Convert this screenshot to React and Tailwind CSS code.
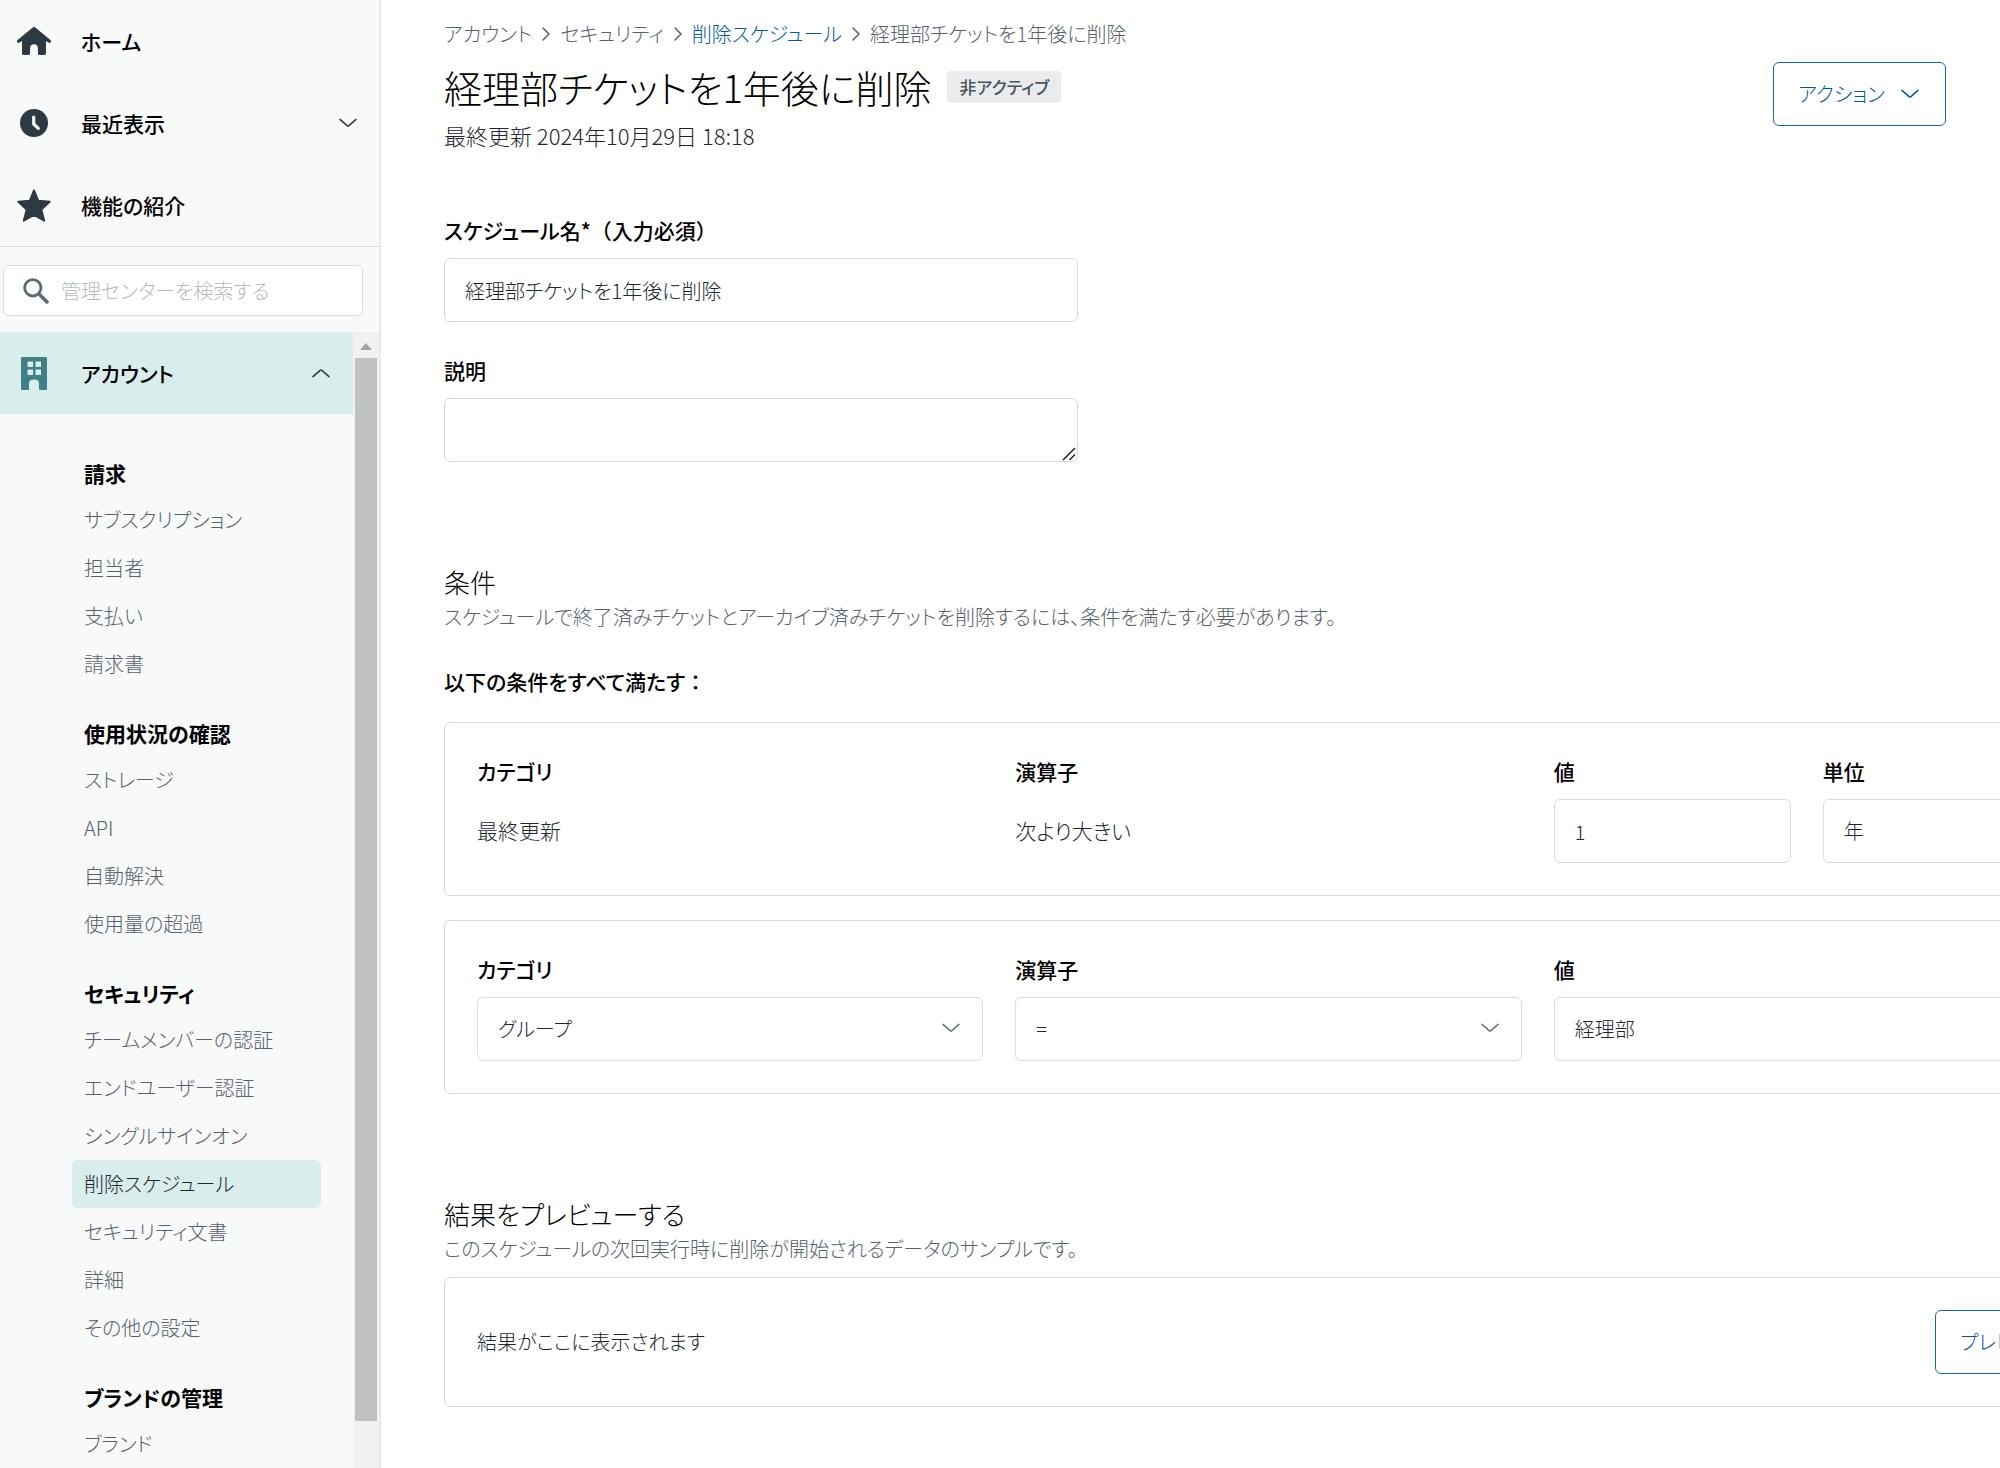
import React from "react";

const BODY = "text-[20px] leading-8";
const LABEL = "text-[21px] leading-8 font-medium text-black";

const groups = [
  { title: "請求", items: ["サブスクリプション", "担当者", "支払い", "請求書"] },
  { title: "使用状況の確認", items: ["ストレージ", "API", "自動解決", "使用量の超過"] },
  {
    title: "セキュリティ",
    items: [
      "チームメンバーの認証",
      "エンドユーザー認証",
      "シングルサインオン",
      "削除スケジュール",
      "セキュリティ文書",
      "詳細",
      "その他の設定",
    ],
  },
  { title: "ブランドの管理", items: ["ブランド"] },
];

function Chevron({ className = "", up = false }) {
  return (
    <svg viewBox="0 0 18 10" className={`h-[10px] w-[18px] shrink-0 ${className}`} fill="none" stroke="currentColor" strokeWidth="1.5" strokeLinecap="round" strokeLinejoin="round" aria-hidden="true">
      <path d={up ? "M1 8.6 8.1 2.4a1.3 1.3 0 0 1 1.8 0L17 8.6" : "M1 1.4 8.1 7.6a1.3 1.3 0 0 0 1.8 0L17 1.4"} />
    </svg>
  );
}

function HomeIcon() {
  return (
    <svg viewBox="0 0 34 28" className="h-7 w-[34px]" fill="currentColor" aria-hidden="true">
      <path d="M15.7.5a2 2 0 0 1 2.6 0L33.4 13a1.6 1.6 0 0 1-2 2.6L29 14v12.3c0 1-.6 1.7-1.6 1.7h-4.8c-1 0-1.7-.7-1.7-1.7V21c0-2.200-1.500-3.800-3.900-3.800S13.100 18.800 13.100 21v5.300c0 1-.7 1.700-1.700 1.700H6.600C5.600 28 5 27.300 5 26.300V14l-2.400 1.600a1.600 1.600 0 0 1-2-2.600z" />
    </svg>
  );
}

function ClockIcon() {
  return (
    <svg viewBox="0 0 28 28" className="size-7" aria-hidden="true">
      <circle cx="14" cy="14" r="14" fill="currentColor" />
      <path d="M13.700 8v7l4.600 4.300" fill="none" stroke="#f8f9f9" strokeWidth="3.200" strokeLinecap="round" strokeLinejoin="round" />
    </svg>
  );
}

function StarIcon() {
  return (
    <svg viewBox="0 0 34 33" className="h-[33px] w-[34px]" fill="currentColor" stroke="currentColor" strokeWidth="2" strokeLinejoin="round" aria-hidden="true">
      <path d="m17 1.500 4.300 10.300 11.400 1-8.400 7.600 2.900 11.300L17 25.800 6.800 31.700l2.900-11.300-8.400-7.600 11.400-1z" />
    </svg>
  );
}

function SearchIcon() {
  return (
    <svg viewBox="0 0 26 26" className="size-[26px] shrink-0 text-[#5c6970]" fill="none" stroke="currentColor" strokeWidth="2.800" aria-hidden="true">
      <circle cx="9.800" cy="9.800" r="8.200" />
      <path d="m16 16 9 9" strokeWidth="3.400" />
    </svg>
  );
}

function BuildingIcon() {
  return (
    <svg viewBox="0 0 26 33" className="h-[33px] w-[26px]" fill="#408084" aria-hidden="true">
      <path fillRule="evenodd" d="M1.500 0h23C25.500 0 26 .6 26 1.500v30c0 .9-.5 1.500-1.500 1.500h-5c-1 0-1.500-.6-1.500-1.500V26c0-2.400-2-3.500-5-3.500S8 23.600 8 26v5.500C8 32.400 7.500 33 6.500 33h-5C.5 33 0 32.400 0 31.500v-30C0 .6.5 0 1.500 0zM6.500 4.500v5.500h5.500V4.500zm8 0v5.500H20V4.500zm-8 8V18h5.500v-5.500zm8 0V18H20v-5.500z" />
    </svg>
  );
}

function Separator() {
  return (
    <svg viewBox="0 0 8 14" className="h-[14px] w-2 shrink-0" fill="none" stroke="currentColor" strokeWidth="1.500" strokeLinecap="round" strokeLinejoin="round" aria-hidden="true">
      <path d="m1 1 6 6-6 6" />
    </svg>
  );
}

function NavRow({ icon, label, chevron }) {
  return (
    <button type="button" className="flex h-[82px] w-full items-center pr-[22px] text-left">
      <span className="ml-4 flex w-9 justify-center text-[#2f3941]">{icon}</span>
      <span className={`ml-[29px] flex-1 ${LABEL}`}>{label}</span>
      {chevron && <Chevron className="text-[#2f3941]" />}
    </button>
  );
}

function Sidebar() {
  return (
    <nav className="flex w-[381px] shrink-0 flex-col border-r-2 border-[#e6e8e9] bg-[#f8f9f9]">
      <div className="border-b border-[#d8dcde]">
        <NavRow icon={<HomeIcon />} label="ホーム" />
        <NavRow icon={<ClockIcon />} label="最近表示" chevron />
        <NavRow icon={<StarIcon />} label="機能の紹介" />
      </div>
      <div className="pt-[18px] pr-4 pb-4 pl-[3px]">
        <label className="flex h-[51px] items-center gap-3 rounded-md border border-[#d8dcde] bg-white px-[19px]">
          <SearchIcon />
          <input
            type="search"
            aria-label="管理センターを検索する"
            placeholder="管理センターを検索する"
            className={`min-w-0 flex-1 bg-transparent outline-none placeholder:text-[#b4bbc0] ${BODY}`}
          />
        </label>
      </div>
      <div className="flex min-h-0 flex-1">
        <div className="min-w-0 flex-1 overflow-hidden">
          <button type="button" className="flex h-[82px] w-full items-center bg-[#daeded] pr-[23px] text-left">
            <span className="ml-4 flex w-9 justify-center">
              <BuildingIcon />
            </span>
            <span className={`ml-[29px] flex-1 ${LABEL}`}>アカウント</span>
            <Chevron up className="text-[#2f3941]" />
          </button>
          <div className="flex flex-col gap-6 pt-[38px] pr-8 pl-[72px]">
            {groups.map((g) => (
              <section key={g.title}>
                <h3 className="flex h-11 items-center pl-3 text-[21px] font-bold text-black">{g.title}</h3>
                <ul>
                  {g.items.map((item) => (
                    <li key={item}>
                      <a
                        href="#"
                        className={`flex h-12 items-center rounded-md pl-3 text-[20px] whitespace-nowrap ${
                          item === "削除スケジュール" ? "bg-[#daeded] text-[#1c262e]" : "text-[#56616b]"
                        }`}
                      >
                        {item}
                      </a>
                    </li>
                  ))}
                </ul>
              </section>
            ))}
          </div>
        </div>
        <div className="flex w-[26px] flex-col items-center bg-[#f1f1f1]" aria-hidden="true">
          <svg viewBox="0 0 12 7" className="mt-[11px] mb-2 h-[7px] w-3 shrink-0" fill="#a3a3a3">
            <path d="M6 0l6 7H0z" />
          </svg>
          <div className="h-[1063px] w-[22px] bg-[#c1c1c1]" />
        </div>
      </div>
    </nav>
  );
}

const FIELD = "h-16 w-full rounded-md border border-[#d8dcde] bg-white px-5 text-[20px] text-[#1c262e] outline-none";

function Field({ id, label, className = "", children }) {
  return (
    <div className={`flex flex-col gap-3 ${className}`}>
      <label htmlFor={id} className={LABEL}>{label}</label>
      {children}
    </div>
  );
}

function Select({ id, options }) {
  return (
    <div className="relative">
      <select id={id} className={`appearance-none ${FIELD}`}>
        {options.map((o) => (
          <option key={o}>{o}</option>
        ))}
      </select>
      <Chevron className="pointer-events-none absolute top-[26px] right-[23px] text-[#68737d]" />
    </div>
  );
}

function Card({ children }) {
  return <div className="grid grid-cols-6 gap-8 rounded-md border border-[#d8dcde] px-8 py-8">{children}</div>;
}

function StaticField({ label, value }) {
  return (
    <dl className="col-span-2 flex flex-col gap-3">
      <dt className={LABEL}>{label}</dt>
      <dd className="flex h-16 items-center text-[21px] text-[#1c262e]">{value}</dd>
    </dl>
  );
}

export default function App() {
  return (
    <div className="flex h-screen overflow-hidden bg-white font-['Noto_Sans_CJK_JP',sans-serif] font-light [font-feature-settings:'palt']">
      <Sidebar />
      <main className="min-w-0 flex-1 overflow-hidden pr-[54px] pl-[63px]">
        <header className="flex items-start justify-between">
          <div>
            <nav className={`flex items-center gap-[10px] pt-[18px] text-[#56616b] ${BODY}`}>
              <a href="#">アカウント</a>
              <Separator />
              <a href="#">セキュリティ</a>
              <Separator />
              <a href="#" className="text-[#0058a3]">削除スケジュール</a>
              <Separator />
              <span>経理部チケットを1年後に削除</span>
            </nav>
            <div className="flex h-[70px] items-center gap-4 pt-1">
              <h1 className="text-[38px] leading-[66px] text-black">経理部チケットを1年後に削除</h1>
              <span className="flex h-8 items-center rounded-sm bg-[#e9ebed] px-3 text-[17px] font-medium text-[#49545c]">非アクティブ</span>
            </div>
            <p className="text-[22px] leading-[30px] text-[#1c262e]">最終更新 2024年10月29日 18:18</p>
          </div>
          <button type="button" className="mt-[62px] flex h-16 items-center gap-4 rounded-md border border-[#1269b0] pr-[26px] pl-6 text-[20px] text-[#0058a3]">
            アクション
            <Chevron />
          </button>
        </header>

        <form className="flex w-[634px] flex-col pt-16">
          <Field
            id="name"
            label={
              <>
                スケジュール名*<span className="[font-feature-settings:normal]">（入力必須）</span>
              </>
            }
          >
            <input id="name" defaultValue="経理部チケットを1年後に削除" className={FIELD} />
          </Field>
          <Field id="description" label="説明" className="mt-8">
            <div className="relative h-16">
              <textarea id="description" className={`resize-none ${FIELD}`} />
              <svg viewBox="0 0 14 14" className="pointer-events-none absolute right-[2px] bottom-[1px] size-[14px]" stroke="#222" strokeWidth="1.500" aria-hidden="true">
                <path d="M1 13 13 1M7.500 13 13 7.500" />
              </svg>
            </div>
          </Field>
        </form>

        <section className="-mr-[147px] pt-[102px]">
          <h2 className="text-[26px] leading-9 text-black">条件</h2>
          <p className={`pt-px text-[#56616b] ${BODY}`}>スケジュールで終了済みチケットとアーカイブ済みチケットを削除するには、条件を満たす必要があります。</p>
          <h3 className={`mt-8 ${LABEL}`}>
            以下の条件をすべて満たす<span className="[font-feature-settings:normal]">：</span>
          </h3>
          <div className="mt-[25px] flex flex-col gap-6">
            <Card>
              <StaticField label="カテゴリ" value="最終更新" />
              <StaticField label="演算子" value="次より大きい" />
              <Field id="amount" label="値">
                <input id="amount" defaultValue="1" className={FIELD} />
              </Field>
              <Field id="unit" label="単位">
                <Select id="unit" options={["年"]} />
              </Field>
            </Card>
            <Card>
              <Field id="category" label="カテゴリ" className="col-span-2">
                <Select id="category" options={["グループ"]} />
              </Field>
              <Field id="operator" label="演算子" className="col-span-2">
                <Select id="operator" options={["="]} />
              </Field>
              <Field id="value" label="値" className="col-span-2">
                <Select id="value" options={["経理部"]} />
              </Field>
            </Card>
          </div>
        </section>

        <section className="-mr-[147px] pt-[102px]">
          <h2 className="text-[26px] leading-9 text-black">結果をプレビューする</h2>
          <p className={`pt-px text-[#56616b] ${BODY}`}>このスケジュールの次回実行時に削除が開始されるデータのサンプルです。</p>
          <div className="mt-3 flex items-center justify-between rounded-md border border-[#d8dcde] p-8">
            <p className={`text-[#1c262e] ${BODY}`}>結果がここに表示されます</p>
            <button type="button" className="h-16 w-[125px] rounded-md border border-[#1269b0] pl-6 text-left text-[20px] whitespace-nowrap text-[#0058a3]">プレビュー</button>
          </div>
        </section>
      </main>
    </div>
  );
}
